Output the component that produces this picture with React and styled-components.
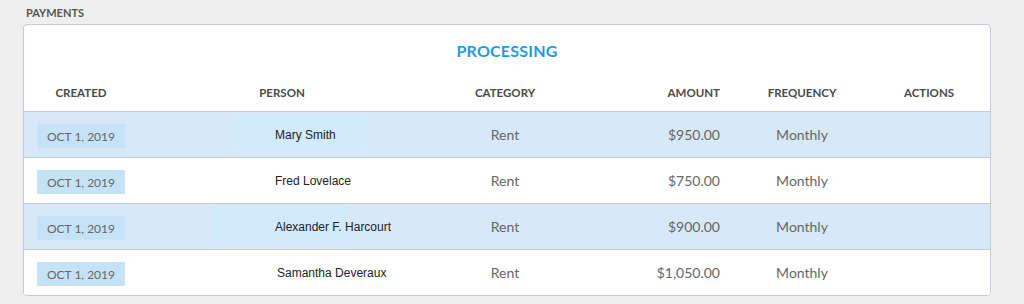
import React from "react"
import styled, { createGlobalStyle } from "styled-components"

const GlobalStyle = createGlobalStyle`
  html, body {
    margin: 0;
    padding: 0;
    background: #efefef;
    font-family: Lato, "Open Sans", sans-serif;
  }
`

const payments = [
  { created: "OCT 1, 2019", person: "Mary Smith", category: "Rent", amount: "$950.00", frequency: "Monthly", highlighted: true, glow: 95 },
  { created: "OCT 1, 2019", person: "Fred Lovelace", category: "Rent", amount: "$750.00", frequency: "Monthly" },
  { created: "OCT 1, 2019", person: "Alexander F. Harcourt", category: "Rent", amount: "$900.00", frequency: "Monthly", highlighted: true, glow: 74 },
  { created: "OCT 1, 2019", person: "Samantha Deveraux", category: "Rent", amount: "$1,050.00", frequency: "Monthly", nudge: 2 },
]

const App = () => (
  <Page>
    <GlobalStyle />
    <Label>PAYMENTS</Label>
    <Card>
      <Title>PROCESSING</Title>
      <HeaderRow>
        <HeadCell>CREATED</HeadCell>
        <HeadCell>PERSON</HeadCell>
        <HeadCell>CATEGORY</HeadCell>
        <HeadCell $align="flex-end">AMOUNT</HeadCell>
        <HeadCell>FREQUENCY</HeadCell>
        <HeadCell>ACTIONS</HeadCell>
      </HeaderRow>
      {payments.map((p, i) => (
        <Row key={i} $highlighted={p.highlighted} $last={i === payments.length - 1}>
          <Cell>
            <DateBadge>{p.created}</DateBadge>
          </Cell>
          <PersonCell>
            {p.glow !== undefined && <Glow $left={p.glow} />}
            <Name style={p.nudge ? { marginLeft: p.nudge } : undefined}>{p.person}</Name>
          </PersonCell>
          <Cell>{p.category}</Cell>
          <Cell $align="flex-end">{p.amount}</Cell>
          <Cell>{p.frequency}</Cell>
          <Cell />
        </Row>
      ))}
    </Card>
  </Page>
)

export default App

const Page = styled.div`
  padding: 6px 33px 8px 23px;
`

const Label = styled.div`
  font-size: 11px;
  line-height: 13px;
  font-weight: 700;
  color: #555;
  padding-left: 3px;
  margin-bottom: 5px;
`

const Card = styled.div`
  background: #fff;
  border: 1px solid #c3ccd6;
  border-radius: 4px;
  overflow: hidden;
`

const Title = styled.h2`
  margin: 0;
  padding-top: 16px;
  font-size: 16px;
  line-height: 20px;
  font-weight: 700;
  color: #1c9be6;
  text-align: center;
  letter-spacing: 0.2px;
`

const columns = "114px 288px 158px 152px 132px 1fr"

const HeaderRow = styled.div`
  display: grid;
  grid-template-columns: ${columns};
  height: 38px;
  margin-top: 12px;
  border-bottom: 1px solid #c3ccd6;
`

const HeadCell = styled.div`
  display: flex;
  align-items: center;
  justify-content: ${p => p.$align || "center"};
  padding-right: ${p => (p.$align ? "16px" : "0")};
  font-size: 11.5px;
  font-weight: 700;
  color: #4a4a4a;
`

const Row = styled.div`
  display: grid;
  grid-template-columns: ${columns};
  height: 45px;
  background: ${p => (p.$highlighted ? "#d7e9f8" : "#fff")};
  border-bottom: ${p => (p.$last ? "none" : "1px solid #c3ccd6")};
`

const Cell = styled.div`
  display: flex;
  align-items: center;
  justify-content: ${p => p.$align || "center"};
  padding-right: ${p => (p.$align ? "16px" : "0")};
  font-size: 14px;
  color: #666;
`

const DateBadge = styled.span`
  display: flex;
  align-items: center;
  justify-content: center;
  width: 88px;
  height: 24px;
  margin-top: 3px;
  background: #c6e2f7;
  font-size: 12px;
  color: #666;
`

const PersonCell = styled.div`
  position: relative;
  display: flex;
  align-items: center;
  padding-left: 137px;
`

const Glow = styled.span`
  position: absolute;
  left: ${p => p.$left}px;
  top: 3px;
  width: 136px;
  height: 36px;
  background: #d1ebfc;
  box-shadow: inset 0 0 0 2px #d4ecfb;
`

const Name = styled.span`
  position: relative;
  font-family: "Liberation Sans", Arial, sans-serif;
  font-size: 12px;
  color: #222;
`
